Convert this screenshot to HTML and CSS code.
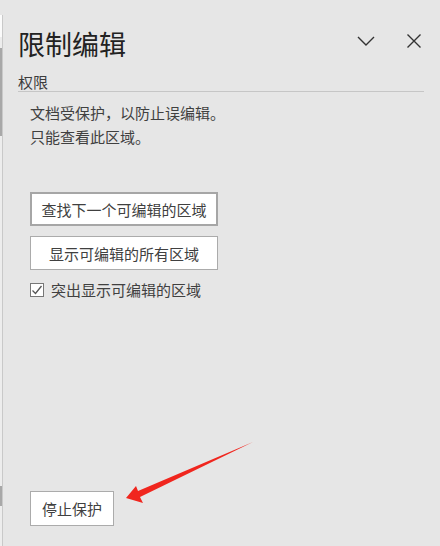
FILE: index.html
```html
<!DOCTYPE html>
<html>
<head>
    <title>限制编辑</title>
    <link rel="stylesheet" href="styles.css">
</head>
<body>
    <div class="page">
        <div class="edge">
            <div class="edge-white"></div>
            <div class="edge-gap"></div>
            <div class="edge-thumb"></div>
            <div class="edge-fill"></div>
            <div class="edge-thumb"></div>
            <div class="edge-rest"></div>
        </div>

        <div class="pane">
            <div class="pane-header">
                <h1>限制编辑</h1>
                <div class="pane-tools">
                    <svg class="icon" width="20" height="20" viewBox="0 0 20 20">
                        <path d="M2 6 L10 14 L18 6" fill="none" stroke="#333" stroke-width="1.4"/>
                    </svg>
                    <svg class="icon" width="16" height="16" viewBox="0 0 16 16">
                        <path d="M1.5 1.5 L14.5 14.5 M14.5 1.5 L1.5 14.5" fill="none" stroke="#333" stroke-width="1.4"/>
                    </svg>
                </div>
            </div>

            <div class="section-title">权限</div>

            <div class="notice">
                <p>文档受保护，以防止误编辑。</p>
                <p>只能查看此区域。</p>
            </div>

            <div class="actions">
                <button class="btn btn-focus">查找下一个可编辑的区域</button>
                <button class="btn">显示可编辑的所有区域</button>
                <label class="check">
                    <span class="box">
                        <svg width="12" height="12" viewBox="0 0 12 12">
                            <path d="M1.5 6.5 L4.5 9.5 L10.5 2" fill="none" stroke="#555" stroke-width="1.3"/>
                        </svg>
                    </span>
                    突出显示可编辑的区域
                </label>
            </div>

            <div class="footer">
                <button class="btn btn-small">停止保护</button>
            </div>
        </div>

        <!-- red annotation arrow -->
        <svg class="annot" width="440" height="546" viewBox="0 0 440 546">
            <polygon points="126,498 136,486 138,491 253,442 140,497 143,503" fill="#f0261e"/>
        </svg>
    </div>
</body>
</html>
```

FILE: styles.css
```css
* { margin: 0; padding: 0; box-sizing: border-box; }
body { font-family: "Noto Sans CJK SC", "Microsoft YaHei", sans-serif; background: #e6e6e6; color: #404040; }
.page { position: relative; display: flex; height: 546px; overflow: hidden; }

/* left edge: document scrollbar + pane border */
.edge { width: 3px; margin-top: 15px; display: flex; flex-direction: column; border-right: 1px solid #c9c9c9; }
.edge-white { height: 22px; background: #fbfbfb; }
.edge-gap { height: 11px; background: #ededed; }
.edge-thumb { height: 88px; background: #a8a8a8; }
.edge-fill { height: 350px; background: #ededed; }
.edge-thumb + .edge-fill + .edge-thumb { height: 20px; }
.edge-rest { flex: 1; background: #ededed; }

.pane { flex: 1; display: flex; flex-direction: column; padding: 0 16px 20px 15px; }
.pane-header { display: flex; align-items: center; justify-content: space-between; padding-top: 28px; height: 58px; }
.pane-header h1 { font-size: 27px; font-weight: normal; line-height: 27px; color: #222; }
.pane-tools { display: flex; align-items: center; gap: 30px; margin-right: 2px; margin-top: -5px; }
.icon { display: block; }

.section-title { font-size: 15px; line-height: 17px; margin-top: 15px; padding-bottom: 1px; border-bottom: 1px solid #c6c6c6; color: #3c3c3c; }

.notice { padding-left: 12px; margin-top: 9px; font-size: 15px; line-height: 24px; }

.actions { padding-left: 12px; margin-top: 43px; display: flex; flex-direction: column; gap: 10px; align-items: flex-start; }
.btn { width: 188px; height: 34px; background: #fff; border: 1px solid #ababab; font-family: inherit; font-size: 15px; color: #404040; }
.btn-focus { border: 2px solid #a6a6a6; }
.btn-small { width: 84px; height: 35px; }

.check { display: flex; align-items: center; gap: 7px; font-size: 15px; line-height: 20px; }
.box { width: 14px; height: 14px; border: 1px solid #777; background: #fff; display: flex; align-items: center; justify-content: center; }

.footer { margin-top: auto; padding-left: 12px; }

.annot { position: absolute; left: 0; top: 0; pointer-events: none; }
```
